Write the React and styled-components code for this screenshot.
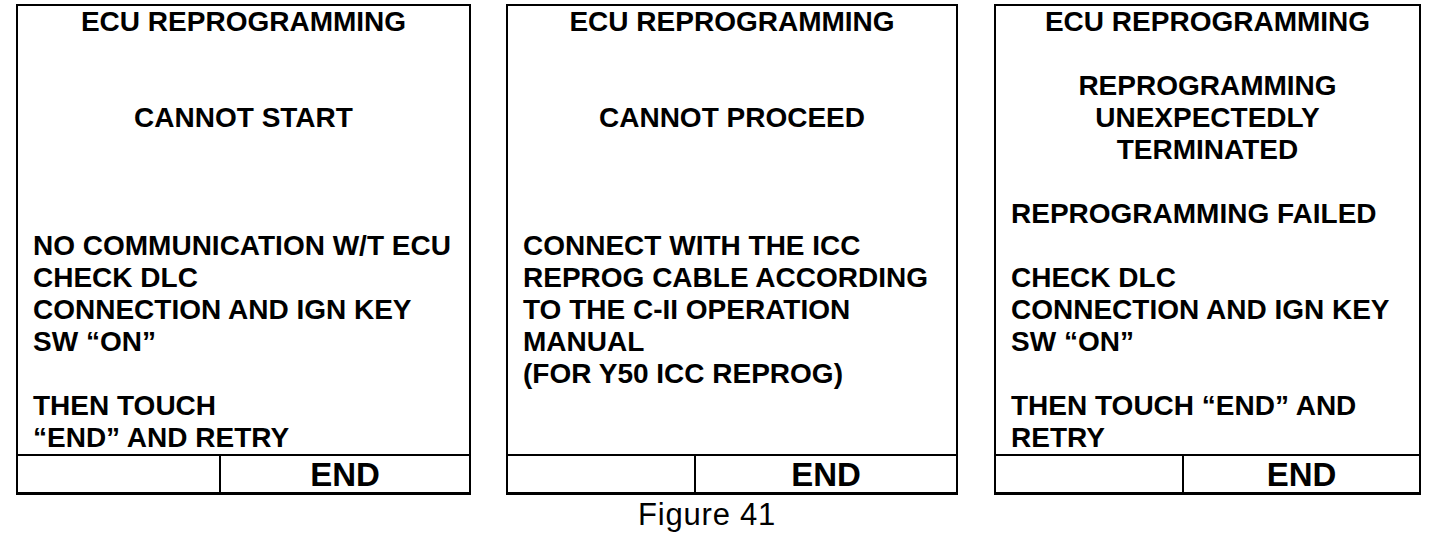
import React from "react";
import styled, { createGlobalStyle } from "styled-components";

const Global = createGlobalStyle`
  html, body { margin: 0; padding: 0; background: #fff; }
  body { font-family: "Liberation Sans", Arial, sans-serif; color: #000; }
`;

const Page = styled.div`
  width: 1456px;
  height: 540px;
  display: flex;
  flex-direction: column;
  padding: 4px 0 0 16px;
  box-sizing: border-box;
`;

const Row = styled.div`
  display: flex;
  align-items: flex-start;
  gap: ${(p) => p.$gap || 35}px;
`;

const Screen = styled.div`
  width: ${(p) => p.$w}px;
  height: 491px;
  box-sizing: border-box;
  border: 2px solid #000;
  border-bottom-width: 3px;
  display: flex;
  flex-direction: column;
  margin-left: ${(p) => p.$ml || 0}px;
`;

const Body = styled.div`
  height: 448px;
  display: flex;
  flex-direction: column;
  padding: 0 0 0 15px;
`;

const Line = styled.div`
  height: 32px;
  line-height: 32px;
  font-size: 28px;
  font-weight: 700;
  letter-spacing: 0;
  white-space: nowrap;
  text-align: ${(p) => (p.$center ? "center" : "left")};
  margin-left: ${(p) => (p.$center ? "-15px" : "0")};
`;

const Footer = styled.div`
  flex: 1;
  display: grid;
  grid-template-columns: ${(p) => p.$left}px 1fr;
  border-top: 2px solid #000;
`;

const Cell = styled.div`
  display: flex;
  align-items: center;
  justify-content: center;
  font-size: 33px;
  font-weight: 700;
  line-height: 1;
  & + & { border-left: 2px solid #000; }
`;

const Caption = styled.div`
  font-size: 31px;
  line-height: 34px;
  letter-spacing: 0.8px;
  margin-top: 3px;
  padding-left: 622px;
`;

const screens = [
  {
    w: 455,
    left: 201,
    lines: [
      ["ECU REPROGRAMMING", true],
      [""],
      [""],
      ["CANNOT START", true],
      [""],
      [""],
      [""],
      ["NO COMMUNICATION W/T ECU"],
      ["CHECK DLC"],
      ["CONNECTION AND IGN KEY"],
      ["SW \u201cON\u201d"],
      [""],
      ["THEN TOUCH"],
      ["\u201cEND\u201d AND RETRY"],
    ],
  },
  {
    w: 452,
    left: 186,
    lines: [
      ["ECU REPROGRAMMING", true],
      [""],
      [""],
      ["CANNOT PROCEED", true],
      [""],
      [""],
      [""],
      ["CONNECT WITH THE ICC"],
      ["REPROG CABLE ACCORDING"],
      ["TO THE C-II OPERATION"],
      ["MANUAL"],
      ["(FOR Y50 ICC REPROG)"],
      [""],
      [""],
    ],
  },
  {
    w: 427,
    left: 186,
    lines: [
      ["ECU REPROGRAMMING", true],
      [""],
      ["REPROGRAMMING", true],
      ["UNEXPECTEDLY", true],
      ["TERMINATED", true],
      [""],
      ["REPROGRAMMING FAILED"],
      [""],
      ["CHECK DLC"],
      ["CONNECTION AND IGN KEY"],
      ["SW \u201cON\u201d"],
      [""],
      ["THEN TOUCH \u201cEND\u201d AND"],
      ["RETRY"],
    ],
  },
];

export default function App() {
  return (
    <>
      <Global />
      <Page>
        <Row $gap={35}>
          {screens.map((s, i) => (
            <Screen key={i} $w={s.w} $ml={i === 2 ? 1 : 0}>
              <Body>
                {s.lines.map(([t, c], j) => (
                  <Line key={j} $center={c}>
                    {t}
                  </Line>
                ))}
              </Body>
              <Footer $left={s.left}>
                <Cell />
                <Cell>END</Cell>
              </Footer>
            </Screen>
          ))}
        </Row>
        <Caption>Figure 41</Caption>
      </Page>
    </>
  );
}
